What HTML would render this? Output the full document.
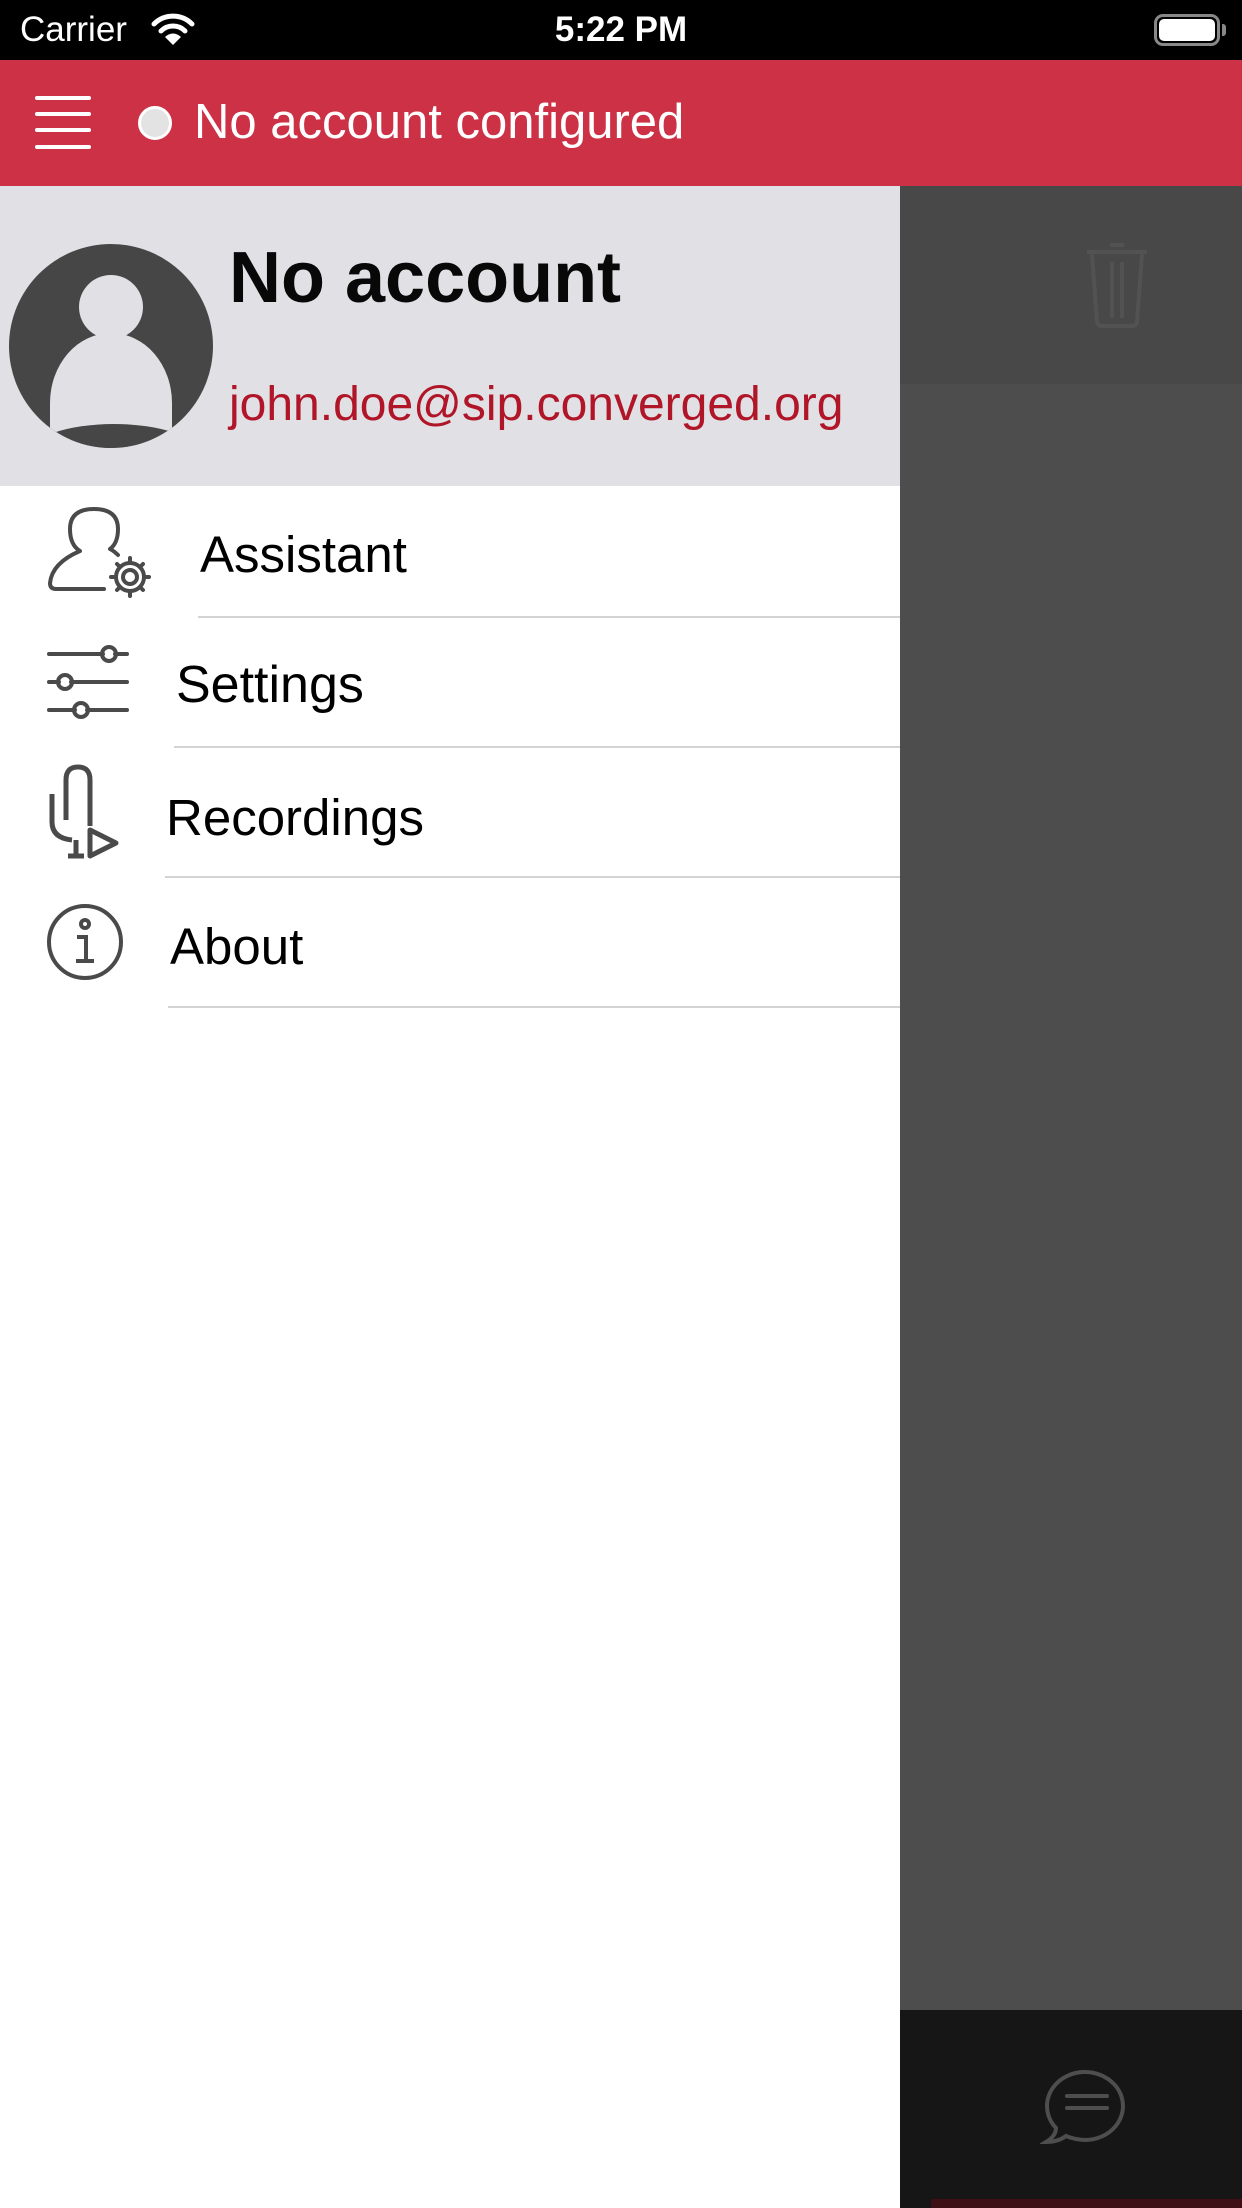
<!DOCTYPE html>
<html><head><meta charset="utf-8"><style>
*{margin:0;padding:0;box-sizing:border-box}
body{width:1242px;height:2208px;position:relative;overflow:hidden;background:#fff;font-family:"Liberation Sans",sans-serif}
.a{position:absolute}
.t{position:absolute;white-space:nowrap;line-height:1}
.sep{position:absolute;height:2px;background:#d3d3d3;right:342px}
</style></head><body>
<div class="a" style="left:0;top:0;width:1242px;height:60px;background:#000"></div>
<div class="t" style="left:20px;top:12px;font-size:35px;color:#fff">Carrier</div>
<svg class="a" style="left:150px;top:12px" width="46" height="36" viewBox="0 0 46 36"><path d="M4 12 A27 27 0 0 1 42 12" stroke="#fff" stroke-width="5" fill="none" stroke-linecap="round"/><path d="M11 19 A17 17 0 0 1 35 19" stroke="#fff" stroke-width="5" fill="none" stroke-linecap="round"/><path d="M23 33 L15 25 A11 11 0 0 1 31 25 Z" fill="#fff"/></svg>
<div class="t" style="left:0;width:1242px;text-align:center;top:12px;font-size:35px;font-weight:bold;color:#fff">5:22 PM</div>
<div class="a" style="left:1154px;top:14px;width:66px;height:32px;border:3px solid #888;border-radius:9px"></div>
<div class="a" style="left:1159px;top:19px;width:56px;height:22px;background:#fff;border-radius:5px"></div>
<div class="a" style="left:1222px;top:24px;width:4px;height:12px;background:#888;border-radius:0 3px 3px 0"></div>

<div class="a" style="left:0;top:60px;width:1242px;height:126px;background:#cd3146"></div>
<div class="a" style="left:35px;top:96px;width:56px;height:4px;background:#fff;border-radius:2px"></div>
<div class="a" style="left:35px;top:112px;width:56px;height:4px;background:#fff;border-radius:2px"></div>
<div class="a" style="left:35px;top:128px;width:56px;height:4px;background:#fff;border-radius:2px"></div>
<div class="a" style="left:35px;top:145px;width:56px;height:4px;background:#fff;border-radius:2px"></div>
<div class="a" style="left:138px;top:106px;width:34px;height:34px;border-radius:50%;background:#e3e3e3;border:3px solid #fff"></div>
<div class="t" style="left:194px;top:98px;font-size:49px;color:#fff">No account configured</div>

<div class="a" style="left:900px;top:186px;width:342px;height:198px;background:#484848"></div>
<div class="a" style="left:900px;top:384px;width:342px;height:1626px;background:#4d4d4d"></div>
<svg class="a" style="left:1082px;top:242px" width="70" height="86" viewBox="0 0 70 86"><g stroke="#525252" stroke-width="4" fill="none"><path d="M28 3h14"/><path d="M5 10h60"/><path d="M10 12l5 68q1 4 5 4h30q4 0 5-4l5-68"/><path d="M30 20v56M40 20v56"/></g></svg>
<div class="a" style="left:900px;top:2010px;width:342px;height:198px;background:#161616"></div>
<div class="a" style="left:931px;top:2199px;width:311px;height:9px;background:#3e0f15"></div>
<svg class="a" style="left:1040px;top:2062px" width="90" height="84" viewBox="0 0 90 84"><g stroke="#4e4e4e" stroke-width="4" fill="none" stroke-linecap="round"><path d="M6 80q12 0 20-6q10 4 20 4a38 34 0 1 0 -30 -12q0 8 -10 14z"/><path d="M27 34h40M27 46h40"/></g></svg>

<div class="a" style="left:0;top:186px;width:900px;height:300px;background:#e1e0e5"></div>
<div class="a" style="left:9px;top:244px;width:204px;height:204px;border-radius:50%;background:#464646;overflow:hidden">
 <div class="a" style="left:70px;top:31px;width:64px;height:64px;border-radius:50%;background:#e1e0e5"></div>
 <div class="a" style="left:41px;top:89px;width:122px;height:110px;border-radius:61px 61px 0 0/70px 70px 0 0;background:#e1e0e5"></div>
 <div class="a" style="left:20px;top:180px;width:170px;height:60px;border-radius:50%;background:#464646"></div>
</div>
<div class="t" style="left:229px;top:242px;font-size:72px;font-weight:bold;color:#080808">No account</div>
<div class="t" style="left:229px;top:381px;font-size:48px;color:#b01528">john.doe@sip.converged.org</div>

<svg class="a" style="left:46px;top:505px" width="110" height="94" viewBox="0 0 110 94"><g stroke="#4a4a4a" stroke-width="4" fill="none" stroke-linejoin="round" stroke-linecap="round"><path d="M58 84H10q-6 0-6-6q2-20 30-32q-10-6-10-22q0-20 24-20q24 0 24 20q0 14-8 20q4 2 8 6"/><circle cx="84" cy="72" r="7"/><circle cx="84" cy="72" r="14"/><path d="M84 53v5M84 86v5M65 72h5M98 72h5M71 59l3 3M94 82l3 3M97 59l-3 3M74 82l-3 3"/></g></svg>
<div class="t" style="left:200px;top:529px;font-size:51px;color:#000">Assistant</div>
<div class="sep" style="left:198px;top:616px"></div>

<svg class="a" style="left:46px;top:640px" width="86" height="82" viewBox="0 0 86 82"><g stroke="#4a4a4a" stroke-width="4" fill="none" stroke-linecap="round"><path d="M3 14h54M69 14h12M3 42h10M25 42h56M3 70h26M41 70h40"/><circle cx="63" cy="14" r="7"/><circle cx="19" cy="42" r="7"/><circle cx="35" cy="70" r="7"/></g></svg>
<div class="t" style="left:176px;top:659px;font-size:52px;color:#000">Settings</div>
<div class="sep" style="left:174px;top:746px"></div>

<svg class="a" style="left:46px;top:764px" width="76" height="96" viewBox="0 0 76 96"><g stroke="#4a4a4a" stroke-width="5" fill="none" stroke-linejoin="round"><path d="M44 62V16q0-13-12-13t-12 13v40"/><path d="M6 30v28q0 16 20 18"/><path d="M30 76v16M22 92h16"/><path d="M44 66v26l26-13z"/></g></svg>
<div class="t" style="left:166px;top:792px;font-size:51px;color:#000">Recordings</div>
<div class="sep" style="left:165px;top:876px"></div>

<svg class="a" style="left:46px;top:903px" width="78" height="78" viewBox="0 0 78 78"><g stroke="#4a4a4a" stroke-width="4" fill="none"><circle cx="39" cy="39" r="36"/><circle cx="39" cy="21" r="4"/><path d="M31 34h9v24M30 58h18"/></g></svg>
<div class="t" style="left:170px;top:921px;font-size:51px;color:#000">About</div>
<div class="sep" style="left:168px;top:1006px"></div>
</body></html>
